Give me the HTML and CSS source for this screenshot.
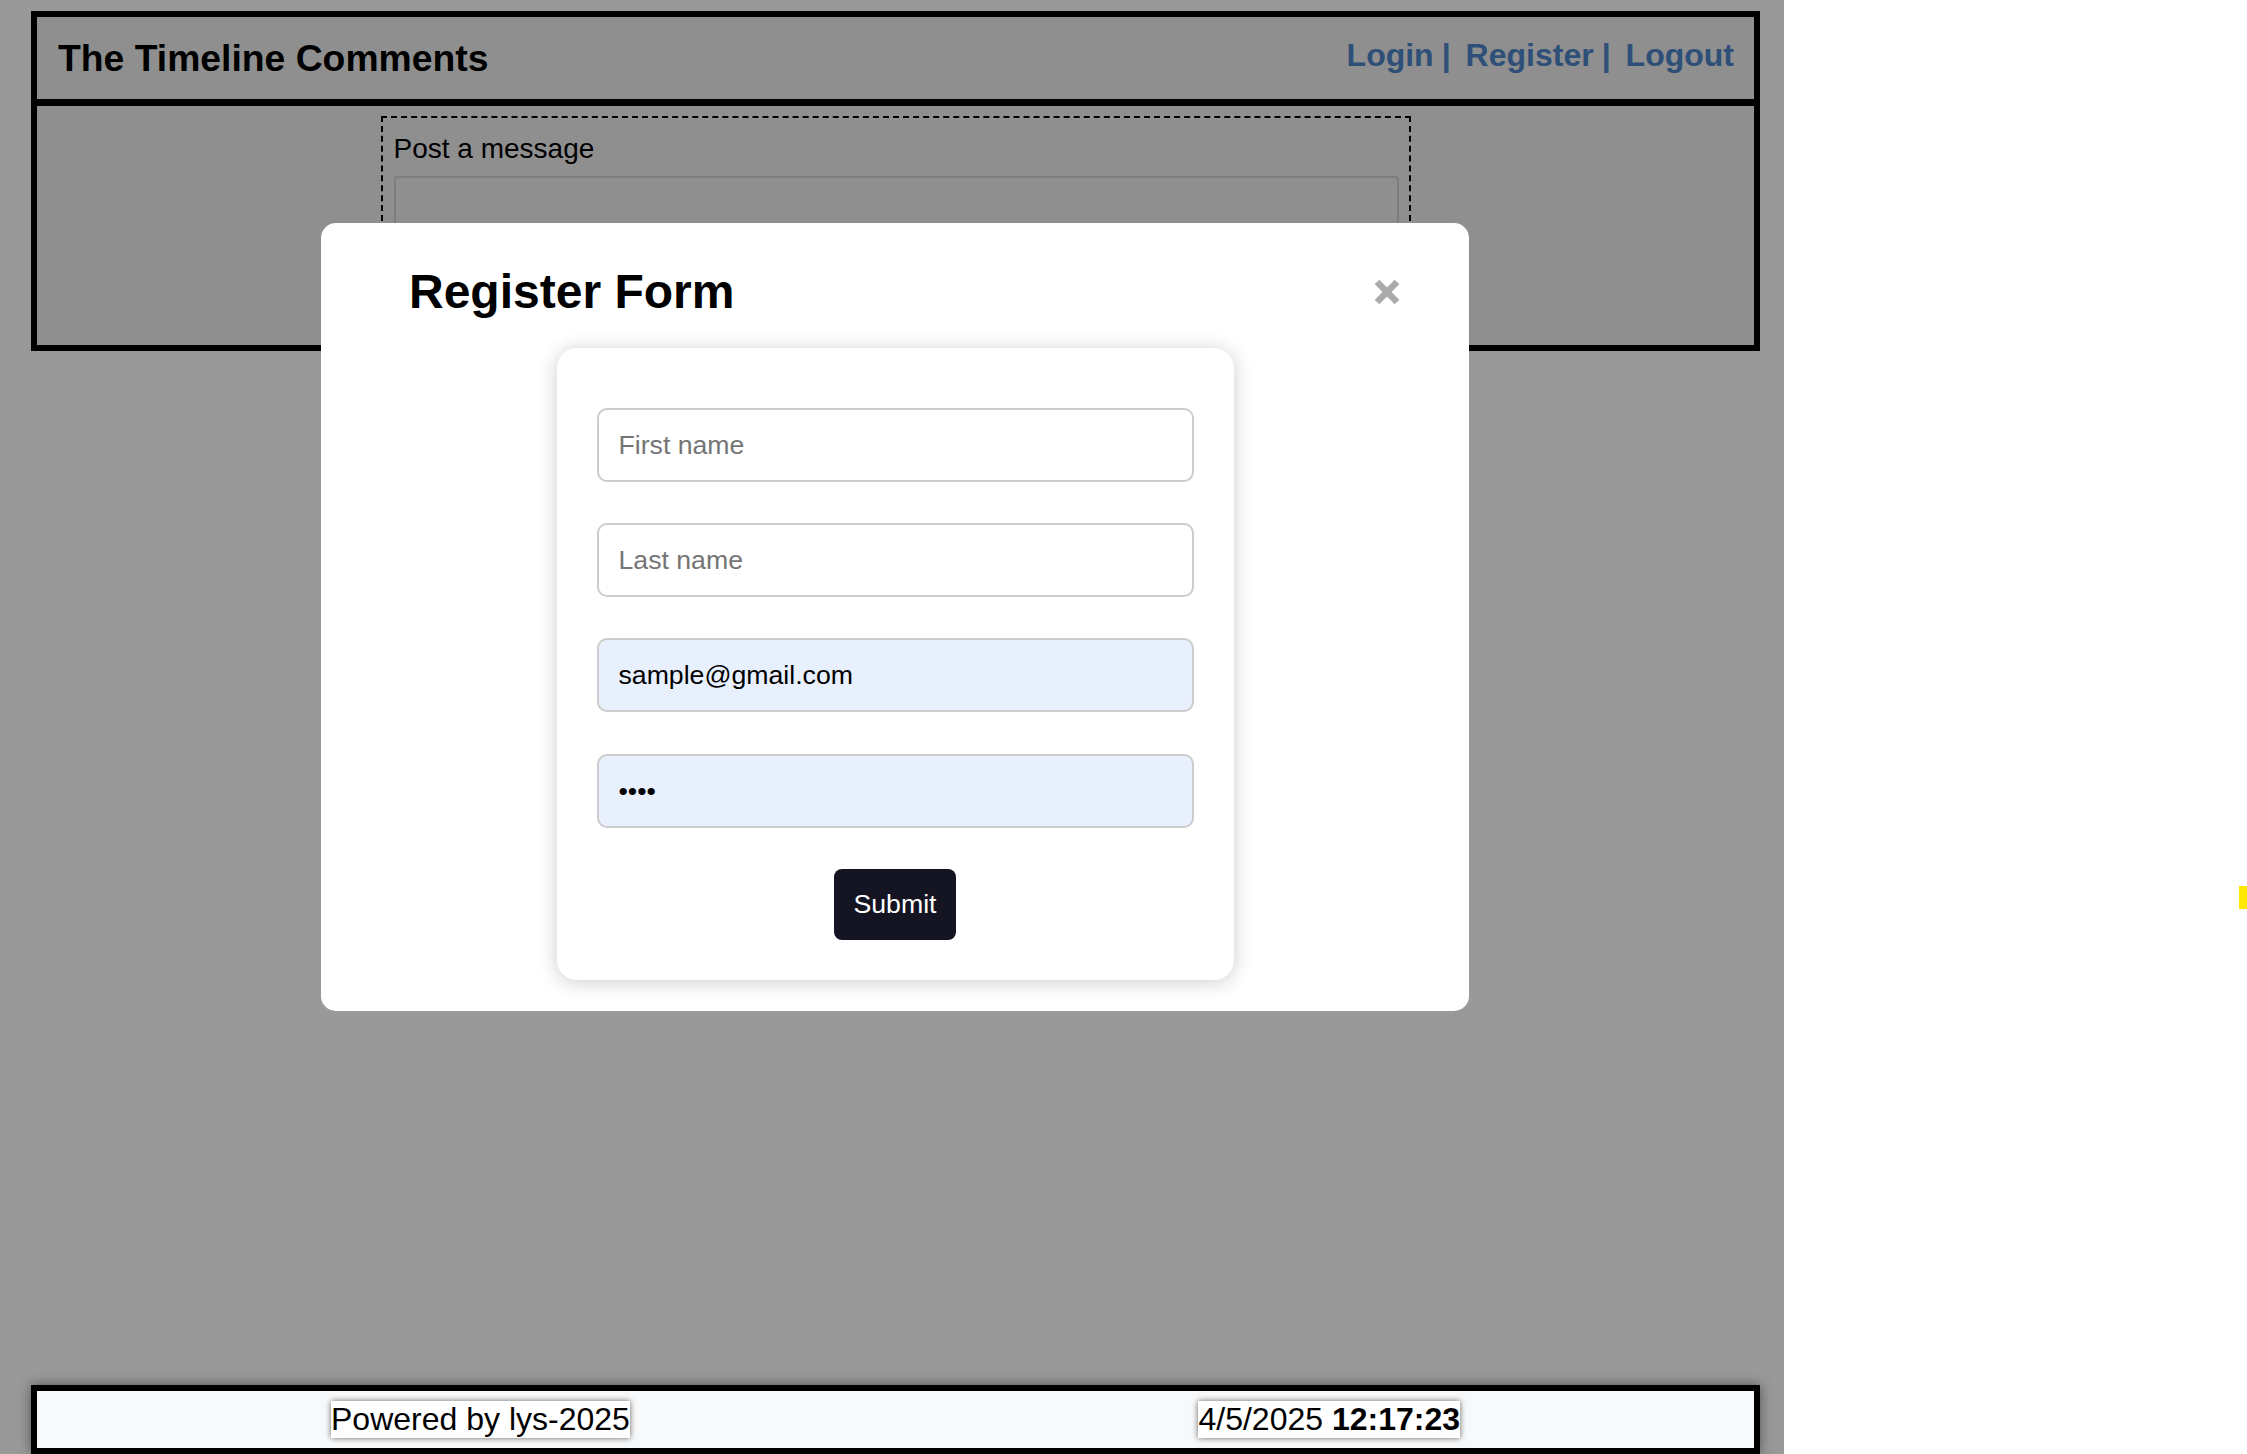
FILE: index.html
```html
<!DOCTYPE html>
<html lang="en">
<head>
<meta charset="utf-8">
<title>The Timeline Comments</title>
<link rel="stylesheet" href="styles.css">
</head>
<body>
<div class="page">
  <div class="frame">
    <header class="header">
      <h1 class="site-title">The Timeline Comments</h1>
      <nav class="links">
        <a href="#">Login</a><span class="sep">|</span><a href="#">Register</a><span class="sep">|</span><a href="#">Logout</a>
      </nav>
    </header>
    <main class="main">
      <section class="post-box">
        <label class="post-label" for="msg">Post a message</label>
        <textarea id="msg" class="post-input"></textarea>
      </section>
    </main>
  </div>

  <footer class="footer">
    <span class="chip">Powered by lys-2025</span>
    <span class="chip">4/5/2025 <b>12:17:23</b></span>
  </footer>

  <div class="overlay">
    <div class="modal">
      <div class="modal-head">
        <h2 class="modal-title">Register Form</h2>
        <span class="close" aria-label="Close">
          <svg width="26" height="26" viewBox="0 0 26 26"><path d="M3 3 L23 23 M23 3 L3 23" stroke="#aaaaaa" stroke-width="6.5" fill="none"/></svg>
        </span>
      </div>
      <form class="card">
        <input class="field" type="text" placeholder="First name">
        <input class="field" type="text" placeholder="Last name">
        <input class="field filled" type="email" value="sample@gmail.com">
        <input class="field filled" type="password" value="1234">
        <button class="submit" type="button">Submit</button>
      </form>
    </div>
  </div>
</div>
<div class="marker"></div>
</body>
</html>
```

FILE: styles.css
```css
* {
  box-sizing: border-box;
}

html,
body {
  margin: 0;
  padding: 0;
  background: #ffffff;
}

body {
  font-family: "Liberation Sans", Arial, sans-serif;
  color: #000;
  overflow: hidden;
}

.page {
  position: relative;
  width: 1784px;
  min-height: 100vh;
  display: flex;
  flex-direction: column;
}

/* header + main frame */
.frame {
  margin: 11px 24px 0 31px;
  border: 6px solid #000;
  background: #eeeeee;
}

.header {
  height: 89px;
  border-bottom: 7px solid #000;
  display: flex;
  align-items: center;
  justify-content: space-between;
  padding: 0 20px 0 21px;
}

.site-title {
  margin: 0;
  font-size: 37.3px;
  font-weight: bold;
  line-height: normal;
}

.links {
  display: flex;
  font-size: 32px;
  font-weight: bold;
  line-height: normal;
  margin-bottom: 5px;
}

.links a,
.sep {
  color: #4d84c8;
  text-decoration: none;
}

.sep {
  margin: 0 15px 0 8px;
}

.main {
  height: 239px;
  padding-top: 10px;
}

.post-box {
  width: 1030px;
  margin: 0 auto;
  border: 2px dashed #000;
  padding: 15px 10px 12px 11px;
}

.post-label {
  display: block;
  font-size: 28px;
  line-height: normal;
}

.post-input {
  display: block;
  width: 100%;
  height: 120px;
  margin-top: 11px;
  border: 2px solid #d0d0d0;
  border-radius: 4px;
  background: transparent;
  resize: none;
  font: inherit;
}

/* footer */
.footer {
  position: relative;
  z-index: 2;
  margin: auto 24px 0 31px;
  border: 6px solid #000;
  background: #f8f9fa;
  padding: 10px 294px;
  display: flex;
  justify-content: space-between;
  align-items: center;
  font-size: 32px;
  box-shadow: 0 0 12px rgba(0, 0, 0, 0.45);
}

.chip {
  background: #ffffff;
  line-height: normal;
  box-shadow: 0 0 6px rgba(0, 0, 0, 0.6);
}

/* modal */
.overlay {
  position: absolute;
  inset: 0;
  z-index: 1;
  background: rgba(0, 0, 0, 0.4);
  padding: 223px 0 0 321px;
}

.modal {
  width: 1148px;
  background: #ffffff;
  border-radius: 15px;
  padding-bottom: 31px;
}

.modal-head {
  display: flex;
  justify-content: space-between;
  align-items: center;
  padding: 41px 69px 0 88px;
}

.modal-title {
  margin: 0;
  font-size: 48px;
  font-weight: bold;
  line-height: 55px;
}

.close {
  display: block;
  width: 26px;
  height: 26px;
}

.close svg {
  display: block;
}

.card {
  width: 677px;
  margin: 29px auto 0;
  background: #ffffff;
  border-radius: 20px;
  box-shadow: 0 2px 20px rgba(0, 0, 0, 0.2);
  padding: 60px 40px 40px;
  display: flex;
  flex-direction: column;
  align-items: center;
}

.field {
  display: block;
  width: 100%;
  height: 74px;
  margin: 0 0 41px;
  border: 2px solid #cccccc;
  border-radius: 10px;
  padding: 0 20px;
  font: 26.67px "Liberation Sans", Arial, sans-serif;
  color: #000;
  background: #ffffff;
  outline: none;
}

.field:nth-of-type(4) {
  margin-top: 1px;
}

.field::placeholder {
  color: #757575;
  opacity: 1;
}

.field.filled {
  background: #e8f0fe;
}

.submit {
  height: 71px;
  padding: 0 20px;
  background: #151423;
  color: #ffffff;
  border: 0;
  border-radius: 8px;
  font: 26.67px "Liberation Sans", Arial, sans-serif;
}

.marker {
  position: fixed;
  right: 0;
  top: 886px;
  width: 8px;
  height: 23px;
  background: #ffe800;
}
```
